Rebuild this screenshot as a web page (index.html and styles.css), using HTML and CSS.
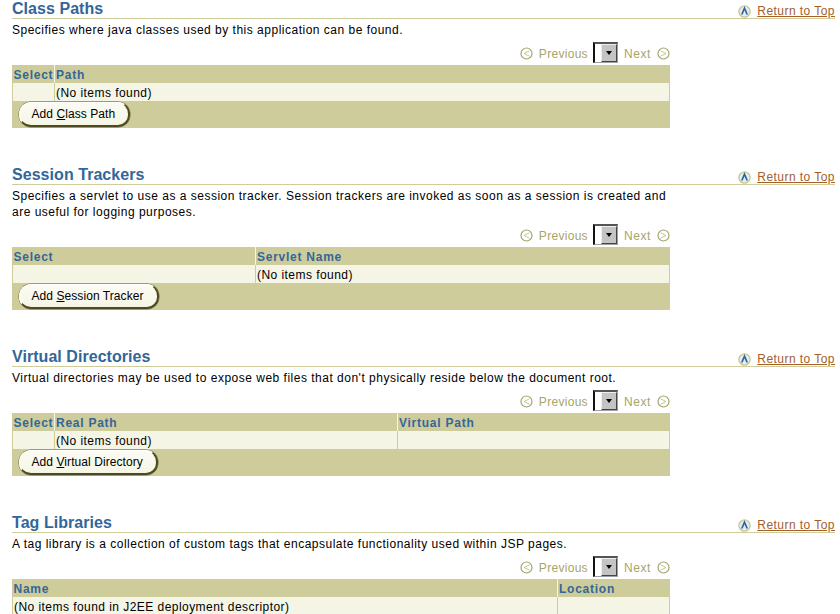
FILE: index.html
```html
<!DOCTYPE html>
<html lang="en">
<head>
  <meta charset="UTF-8">
  <title>Web Module Properties</title>
  <link rel="stylesheet" href="styles.css">
</head>
<body>
  <svg class="defs" width="0" height="0">
    <symbol id="ico-top" viewBox="0 0 13 13">
      <circle cx="6.5" cy="6.5" r="5.6" fill="#e6edf2" stroke="#c9c794" stroke-width="1.4"/>
      <path d="M3.8 9.5 L6.5 3.2 L9.2 9.5" fill="none" stroke="#336699" stroke-width="1.7"/>
    </symbol>
    <symbol id="ico-prev" viewBox="0 0 13 13">
      <circle cx="6.5" cy="6.5" r="5.5" fill="#fff" stroke="#a5a56c" stroke-width="1.2"/>
      <path d="M9.5 3.8 L4 6.5 L9.5 9.2" fill="none" stroke="#c4c49a"/>
    </symbol>
    <symbol id="ico-next" viewBox="0 0 13 13">
      <circle cx="6.5" cy="6.5" r="5.5" fill="#fff" stroke="#a5a56c" stroke-width="1.2"/>
      <path d="M3.5 3.8 L9 6.5 L3.5 9.2" fill="none" stroke="#c4c49a"/>
    </symbol>
  </svg>

  <div class="page">
    <!-- Class Paths -->
    <section class="section section-first">
      <div class="header">
        <h2>Class Paths</h2>
        <a class="top-link" href="#"><svg class="ico-top"><use href="#ico-top"/></svg><span>Return to Top</span></a>
      </div>
      <p class="desc">Specifies where java classes used by this application can be found.</p>
      <div class="nav">
        <svg class="ico"><use href="#ico-prev"/></svg><span class="nav-prev">Previous</span>
        <div class="picker"><div class="picker-btn"></div></div>
        <span class="nav-next">Next</span><svg class="ico"><use href="#ico-next"/></svg>
      </div>
      <table class="grid">
        <colgroup><col class="col-select"><col></colgroup>
        <tr><th>Select</th><th>Path</th></tr>
        <tr><td></td><td>(No items found)</td></tr>
        <tr><td class="foot" colspan="2"><button class="btn">Add <u>C</u>lass Path</button></td></tr>
      </table>
    </section>

    <!-- Session Trackers -->
    <section class="section">
      <div class="header">
        <h2>Session Trackers</h2>
        <a class="top-link" href="#"><svg class="ico-top"><use href="#ico-top"/></svg><span>Return to Top</span></a>
      </div>
      <p class="desc">Specifies a servlet to use as a session tracker. Session trackers are invoked as soon as a session is created and<br>are useful for logging purposes.</p>
      <div class="nav">
        <svg class="ico"><use href="#ico-prev"/></svg><span class="nav-prev">Previous</span>
        <div class="picker"><div class="picker-btn"></div></div>
        <span class="nav-next">Next</span><svg class="ico"><use href="#ico-next"/></svg>
      </div>
      <table class="grid">
        <colgroup><col class="col-wide"><col></colgroup>
        <tr><th>Select</th><th>Servlet Name</th></tr>
        <tr><td></td><td>(No items found)</td></tr>
        <tr><td class="foot" colspan="2"><button class="btn">Add <u>S</u>ession Tracker</button></td></tr>
      </table>
    </section>

    <!-- Virtual Directories -->
    <section class="section">
      <div class="header">
        <h2>Virtual Directories</h2>
        <a class="top-link" href="#"><svg class="ico-top"><use href="#ico-top"/></svg><span>Return to Top</span></a>
      </div>
      <p class="desc">Virtual directories may be used to expose web files that don't physically reside below the document root.</p>
      <div class="nav">
        <svg class="ico"><use href="#ico-prev"/></svg><span class="nav-prev">Previous</span>
        <div class="picker"><div class="picker-btn"></div></div>
        <span class="nav-next">Next</span><svg class="ico"><use href="#ico-next"/></svg>
      </div>
      <table class="grid">
        <colgroup><col class="col-select"><col class="col-real"><col></colgroup>
        <tr><th>Select</th><th>Real Path</th><th>Virtual Path</th></tr>
        <tr><td></td><td>(No items found)</td><td></td></tr>
        <tr><td class="foot" colspan="3"><button class="btn">Add <u>V</u>irtual Directory</button></td></tr>
      </table>
    </section>

    <!-- Tag Libraries -->
    <section class="section">
      <div class="header">
        <h2>Tag Libraries</h2>
        <a class="top-link" href="#"><svg class="ico-top"><use href="#ico-top"/></svg><span>Return to Top</span></a>
      </div>
      <p class="desc">A tag library is a collection of custom tags that encapsulate functionality used within JSP pages.</p>
      <div class="nav">
        <svg class="ico"><use href="#ico-prev"/></svg><span class="nav-prev">Previous</span>
        <div class="picker"><div class="picker-btn"></div></div>
        <span class="nav-next">Next</span><svg class="ico"><use href="#ico-next"/></svg>
      </div>
      <table class="grid">
        <colgroup><col class="col-name"><col></colgroup>
        <tr><th>Name</th><th>Location</th></tr>
        <tr><td>(No items found in J2EE deployment descriptor)</td><td></td></tr>
      </table>
    </section>
  </div>
</body>
</html>
```

FILE: styles.css
```css
html, body {
  margin: 0;
  padding: 0;
  height: 614px;
  overflow: hidden;
  background-color: #fff;
}
body {
  font-family: "Liberation Sans", Arial, sans-serif;
  font-size: 12px;
  letter-spacing: 0.45px;
  color: #000;
}
.defs {
  display: block;
  height: 0;
}
.page {
  width: 823px;
  padding-left: 12px;
}
.section {
  margin-top: 38px;
}
.section-first {
  margin-top: 0;
}
.header {
  display: flex;
  justify-content: space-between;
  align-items: flex-end;
  height: 18px;
  border-bottom: 1px solid #cfcc9b;
}
.header h2 {
  margin: 0;
  padding-bottom: 1px;
  font-size: 16px;
  line-height: 16px;
  font-weight: bold;
  letter-spacing: 0.05px;
  color: #336699;
}
.top-link {
  display: flex;
  align-items: center;
  color: #a3602c;
  line-height: 13px;
}
.ico-top {
  width: 13px;
  height: 13px;
  margin-right: 6px;
}
.desc {
  margin: 0;
  padding-top: 3px;
  white-space: nowrap;
  line-height: 16px;
  letter-spacing: 0.5px;
}
.nav {
  box-sizing: border-box;
  display: flex;
  justify-content: flex-end;
  align-items: center;
  width: 658px;
  height: 27px;
  padding-top: 4px;
  color: #a5a56c;
}
.ico {
  width: 13px;
  height: 13px;
}
.nav-prev {
  margin-left: 6px;
  margin-right: 5px;
  letter-spacing: 0.3px;
}
.nav-next {
  margin-left: 6px;
  margin-right: 6px;
  letter-spacing: 0.6px;
}
.picker {
  box-sizing: border-box;
  display: flex;
  justify-content: flex-end;
  width: 25px;
  height: 21px;
  margin-top: -3px;
  background-color: #fff;
  border: 1px solid #a0a0a0;
  border-top: 2px solid #555;
  border-left: 2px solid #111;
}
.picker-btn {
  position: relative;
  box-sizing: border-box;
  width: 16px;
  height: 100%;
  background-color: #c4c4c4;
  border: 1px solid #444;
  border-top-color: #eee;
  border-left-color: #eee;
}
.picker-btn::after {
  content: "";
  position: absolute;
  left: 4px;
  top: 6px;
  border: 3.5px solid transparent;
  border-top: 4px solid #000;
}
.grid {
  width: 658px;
  table-layout: fixed;
  border-collapse: collapse;
  background-color: #cfcc9b;
}
.col-select {
  width: 42px;
}
.col-wide {
  width: 243px;
}
.col-real {
  width: 343px;
}
.col-name {
  width: 545px;
}
.grid th {
  height: 17px;
  padding: 1px 0 0 1px;
  text-align: left;
  font-weight: bold;
  letter-spacing: 0.75px;
  color: #336699;
  border-left: 1px solid #f5f5e6;
}
.grid th:first-child {
  padding-left: 1px;
  border-left: 0;
}
.grid td {
  height: 17px;
  padding: 1px 0 0 1px;
  background-color: #f5f5e6;
  border-left: 1px solid #cfcc9b;
}
.grid td:last-child {
  border-right: 1px solid #cfcc9b;
}
.grid td.foot {
  height: 26px;
  padding: 0 0 1px 6px;
  background-color: #cfcc9b;
  border: 0;
  vertical-align: bottom;
  line-height: 0;
}
.btn {
  box-sizing: border-box;
  height: 25px;
  padding: 0 13px 1px 12px;
  font-family: inherit;
  font-size: 12px;
  letter-spacing: 0.07px;
  color: #000;
  background: linear-gradient(#fbfbf3, #f5f5e6);
  border: 1px solid #fff;
  border-right: 2px solid #4d4a20;
  border-bottom: 2px solid #4d4a20;
  border-radius: 12px;
  box-shadow: 0 0 0 0.5px #6f6c3a;
}
```
